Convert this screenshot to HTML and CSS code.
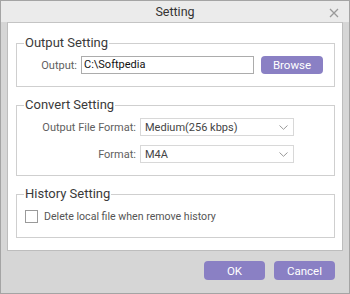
FILE: index.html
```html
<!DOCTYPE html>
<html lang="en">
<head>
  <meta charset="UTF-8">
  <title>Setting</title>
  <link rel="stylesheet" href="styles.css">
</head>
<body>
  <div class="window">
    <div class="titlebar">
      <span class="title">Setting</span>
      <svg class="close" width="10" height="10" viewBox="0 0 10 10">
        <path d="M1 1 L9 9 M9 1 L1 9" stroke="#9a9a9a" stroke-width="1.3" fill="none"/>
      </svg>
    </div>

    <div class="body">
      <div class="panel">
        <fieldset class="group group-output">
          <legend>Output Setting</legend>
          <div class="row">
            <label class="lbl lbl-short">Output:</label>
            <div class="textbox">C:\Softpedia</div>
            <button class="btn btn-browse">Browse</button>
          </div>
        </fieldset>

        <fieldset class="group group-convert">
          <legend>Convert Setting</legend>
          <div class="row">
            <label class="lbl lbl-long">Output File Format:</label>
            <div class="combo">
              <span>Medium(256 kbps)</span>
              <svg width="9" height="5" viewBox="0 0 9 5"><path d="M0.5 0.5 L4.5 4.3 L8.5 0.5" stroke="#999" fill="none"/></svg>
            </div>
          </div>
          <div class="row row-gap">
            <label class="lbl lbl-long">Format:</label>
            <div class="combo">
              <span>M4A</span>
              <svg width="9" height="5" viewBox="0 0 9 5"><path d="M0.5 0.5 L4.5 4.3 L8.5 0.5" stroke="#999" fill="none"/></svg>
            </div>
          </div>
        </fieldset>

        <fieldset class="group group-last">
          <legend>History Setting</legend>
          <div class="check-row">
            <span class="checkbox"></span>
            <span>Delete local file when remove history</span>
          </div>
        </fieldset>
      </div>

      <div class="footer">
        <button class="btn btn-ok">OK</button>
        <button class="btn btn-cancel">Cancel</button>
      </div>
    </div>
  </div>
</body>
</html>
```

FILE: styles.css
```css
body {
  margin: 0;
  font-family: Roboto, "Open Sans", Arial, sans-serif;
  font-size: 11px;
  color: #333;
}
.window {
  width: 350px;
  height: 294px;
  box-sizing: border-box;
  border: 1px solid #a4a4a4;
  background: #d6d6d6;
  display: flex;
  flex-direction: column;
}
.titlebar {
  height: 21px;
  background: #ebebeb;
  display: flex;
  align-items: center;
  justify-content: center;
  position: relative;
}
.title {
  font-size: 12.5px;
  color: #333;
}
.close {
  position: absolute;
  right: 10px;
  top: 7px;
}
.body {
  padding: 0 6px;
}
.panel {
  background: #fff;
  border: 1px solid #bdbdbd;
  border-top: 1px solid #c4c4c4;
  padding: 12px 7px 12px 8px;
}
.group {
  margin: 0 0 10px 0;
  border: 1px solid #cfcfcf;
  padding: 6px 7px 12px 7px;
}
.group-output {
  padding-top: 5px;
}
.group-convert {
  padding-top: 5px;
}
.group-last {
  margin-bottom: 0;
  padding-bottom: 14px;
}
legend {
  font-size: 13px;
  color: #3a3a3a;
  padding: 0 1px;
  line-height: 16px;
}
.row {
  display: flex;
  align-items: center;
}
.row-gap {
  margin-top: 9px;
}
.lbl {
  color: #606060;
  text-align: right;
  margin-right: 4px;
}
.lbl-short {
  width: 53px;
}
.lbl-long {
  width: 112px;
}
.textbox {
  width: 169px;
  height: 16px;
  border: 1px solid #acacac;
  color: #111;
  line-height: 16px;
  padding-left: 2px;
  box-sizing: content-box;
}
.combo {
  height: 16px;
  border: 1px solid #d8d8d8;
  display: flex;
  align-items: center;
  justify-content: space-between;
  padding: 0 5px 0 4px;
  box-sizing: content-box;
  color: #444;
  width: 143px;
}
.btn {
  font-family: inherit;
  font-size: 11.5px;
  color: #fff;
  background: #8a80c4;
  border: none;
  border-radius: 4px;
  height: 18px;
  padding: 0;
  line-height: 18px;
}
.btn-browse {
  width: 62px;
  margin-left: 7px;
}
.check-row {
  display: flex;
  align-items: center;
  margin-top: 2px;
  color: #555;
  font-size: 10.6px;
}
.checkbox {
  width: 11px;
  height: 11px;
  border: 1px solid #9a9a9a;
  margin: 0 6px 0 1px;
}
.footer {
  display: flex;
  justify-content: flex-end;
  gap: 9px;
  padding: 10px 8px 0 0;
}
.btn-ok,
.btn-cancel {
  width: 61px;
  height: 19px;
}
```
